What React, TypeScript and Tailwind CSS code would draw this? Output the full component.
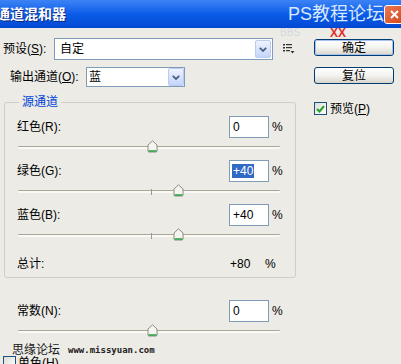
import React from "react";

function Chevron() {
  return (
    <svg width="8" height="5" viewBox="0 0 8 5">
      <path d="M0.8 0.8 L4 4 L7.2 0.8" fill="none" stroke="#4d6185" strokeWidth="1.8" />
    </svg>
  );
}

function ComboButton() {
  return (
    <div className="flex h-[18px] w-[16px] shrink-0 items-center justify-center rounded-[2px] border border-[#bccbef] bg-linear-to-b from-[#eef3fe] to-[#c5d5fa]">
      <Chevron />
    </div>
  );
}

function Thumb({ left }: { left: number }) {
  return (
    <svg className="absolute top-[2px]" style={{ left }} width="11" height="13" viewBox="0 0 11 13">
      <path d="M1 5 L5.5 0.8 L10 5 V11 Q10 12 9 12 H2 Q1 12 1 11 Z" fill="#f5f5f0" stroke="#8c8c80" strokeWidth="1" />
      <path d="M1.6 11 H9.4" stroke="#2fa44a" strokeWidth="1.6" />
    </svg>
  );
}

function Slider({ value }: { value: number }) {
  return (
    <div className="relative ml-[1px] h-[22px] w-[262px]">
      <div className="absolute left-0 right-0 top-[8px] h-[3px] rounded-[1px] border-t border-[#aaa797] bg-[#faf9f4]" />
      <div className="absolute left-[133px] top-[7px] h-[6px] w-px bg-[#9d9a8c]" />
      <Thumb left={129 + value * 0.65} />
    </div>
  );
}

function ValueBox({ value, selected }: { value: string; selected?: boolean }) {
  return (
    <div className="flex h-[22px] w-[40px] items-center border border-[#7f9db9] bg-white pl-[2px] text-[12px] leading-[14px] text-black">
      {selected ? (
        <span className="bg-[#316ac5] px-[1px] text-white">{value}</span>
      ) : (
        <span className="px-[1px]">{value}</span>
      )}
    </div>
  );
}

function ChannelRow({ label, value, selected }: { label: string; value: string; selected?: boolean }) {
  return (
    <div className="flex h-[22px] items-center">
      <div className="w-[212px] text-[12px] leading-[14px]">{label}</div>
      <ValueBox value={value} selected={selected} />
      <div className="ml-[3px] text-[12px] leading-[14px]">%</div>
    </div>
  );
}

function Checkbox({ checked }: { checked?: boolean }) {
  return (
    <div className="flex h-[13px] w-[13px] shrink-0 items-center justify-center border border-[#1c5180] bg-linear-to-br from-[#dcdcd7] to-white">
      {checked && (
        <svg width="9" height="8" viewBox="0 0 9 8">
          <path d="M1 4 L3.5 6.5 L8 1.2" fill="none" stroke="#21a121" strokeWidth="2" />
        </svg>
      )}
    </div>
  );
}

function XPButton({ label, isDefault }: { label: string; isDefault?: boolean }) {
  return (
    <div className="flex h-[17px] w-[80px] items-center justify-center rounded-[3px] border border-[#003c74] bg-linear-to-b from-white via-[#f3f3ef] to-[#d9d5cb] text-[12px] leading-[14px] text-black">
      <div
        className={
          isDefault
            ? "flex h-full w-full items-center justify-center rounded-[2px] border border-[#a9c1ee]"
            : "flex h-full w-full items-center justify-center"
        }
      >
        {label}
      </div>
    </div>
  );
}

export default function App() {
  return (
    <div className="relative flex h-[364px] w-[401px] flex-col overflow-hidden bg-[#ecebe6] font-['Liberation_Sans','Noto_Sans_CJK_SC',sans-serif] text-black">
      {/* Title bar */}
      <div className="flex h-[28px] shrink-0 items-center bg-linear-to-b from-[#3b83f5] via-[#0a5ce8] to-[#0349d2]">
        <div className="ml-[-4px] text-[14px] font-bold leading-[16px] text-white [text-shadow:1px_1px_0_#0a2a80]">
          通道混和器
        </div>
        <div className="flex-1" />
        <div className="mb-[1px] text-[18px] leading-[20px] text-[#d9e7ff]">PS教程论坛</div>
        <div className="mr-[-4px] flex h-[19px] w-[21px] shrink-0 items-center justify-center rounded-[3px] border border-white bg-linear-to-br from-[#e9784f] to-[#d54419]">
          <svg width="9" height="9" viewBox="0 0 9 9">
            <path d="M1 1 L8 8 M8 1 L1 8" stroke="white" strokeWidth="2" />
          </svg>
        </div>
      </div>

      {/* watermark overlay */}
      <div className="absolute left-[280px] top-[28px] text-[10px] leading-[10px] text-[#d3d8e0]">BBS</div>
      <div className="absolute left-[330px] top-[27px] text-[12px] font-bold leading-[12px] text-[#e0302a]">XX</div>

      {/* Body */}
      <div className="flex">
        {/* Left column */}
        <div className="w-[300px] shrink-0 pl-[3px]">
          <div className="mt-[10px] flex h-[22px] items-center">
            <div className="w-[51px] text-[12px] leading-[14px]">
              预设(<span className="underline">S</span>):
            </div>
            <div className="flex h-[22px] w-[219px] items-center justify-between border border-[#7f9db9] bg-white pl-[5px] pr-[1px]">
              <span className="text-[12px] leading-[14px]">自定</span>
              <ComboButton />
            </div>
            <svg className="ml-[10px]" width="12" height="10" viewBox="0 0 12 10">
              <rect x="0" y="0" width="2" height="1.5" fill="#333" />
              <rect x="3" y="0" width="6" height="1.2" fill="#333" />
              <rect x="0" y="3" width="2" height="1.5" fill="#333" />
              <rect x="3" y="3" width="6" height="1.2" fill="#333" />
              <rect x="0" y="6" width="2" height="1.5" fill="#333" />
              <rect x="3" y="6" width="4" height="1.2" fill="#333" />
              <path d="M7.5 7 L11.5 7 L9.5 9.5 Z" fill="#333" />
            </svg>
          </div>

          <div className="mt-[7px] flex h-[20px] items-center pl-[7px]">
            <div className="w-[76px] text-[12px] leading-[14px]">
              输出通道(<span className="underline">O</span>):
            </div>
            <div className="flex h-[20px] w-[99px] items-center justify-between border border-[#7f9db9] bg-white pl-[2px] pr-[0px]">
              <span className="text-[12px] leading-[14px]">蓝</span>
              <ComboButton />
            </div>
          </div>

          <fieldset className="ml-[1px] mt-[8px] w-[292px] rounded-[3px] border border-[#d0cfc4] pb-[5px] pl-[12px]">
            <legend className="ml-[2px] px-[3px] text-[12px] leading-[14px] text-[#0046d5]">源通道</legend>
            <div className="pt-[7px]">
              <ChannelRow label="红色(R):" value="0" />
              <Slider value={0} />
              <ChannelRow label="绿色(G):" value="+40" selected />
              <Slider value={40} />
              <ChannelRow label="蓝色(B):" value="+40" />
              <Slider value={40} />
              <div className="mt-[8px] flex h-[16px] items-center text-[12px] leading-[14px]">
                <div className="w-[213px]">总计:</div>
                <div className="w-[35px]">+80</div>
                <div>%</div>
              </div>
            </div>
          </fieldset>

          <div className="mt-[22px] pl-[14px]">
            <ChannelRow label="常数(N):" value="0" />
            <Slider value={0} />
          </div>

          <div className="flex h-[12px] items-center pl-[9px]">
            <span className="text-[12px] leading-[13px] text-[#1a1a1a]">思缘论坛</span>
            <span className="ml-[8px] font-['DejaVu_Sans_Mono',monospace] text-[9px] font-bold leading-[10px] text-[#222]">
              www.missyuan.com
            </span>
          </div>
          <div className="flex h-[14px] items-start">
            <Checkbox />
            <span className="ml-[2px] text-[12px] leading-[14px]">单色(H)</span>
          </div>
        </div>

        {/* Right column */}
        <div className="ml-[14px] w-[80px] shrink-0">
          <div className="mt-[11px]">
            <XPButton label="确定" isDefault />
          </div>
          <div className="mt-[11px]">
            <XPButton label="复位" />
          </div>
          <div className="mt-[18px] flex h-[13px] items-center">
            <Checkbox checked />
            <span className="ml-[3px] text-[12px] leading-[14px]">
              预览(<span className="underline">P</span>)
            </span>
          </div>
        </div>
      </div>
    </div>
  );
}
